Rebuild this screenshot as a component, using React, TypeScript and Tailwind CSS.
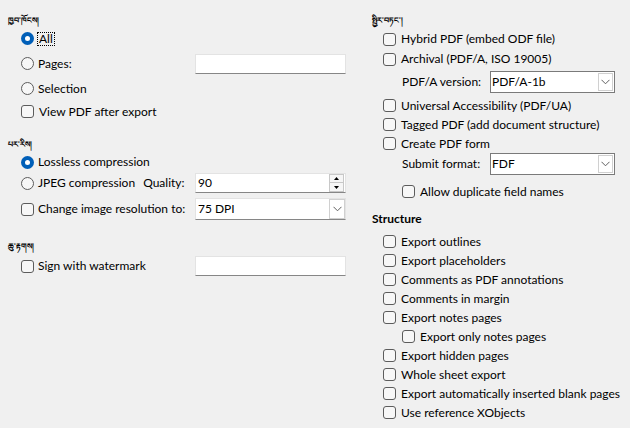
import React from "react"

const font = "font-['Lato','Noto_Sans',sans-serif]"

function Radio({ checked }: { checked?: boolean }) {
  if (checked)
    return (
      <span className="w-[13px] h-[13px] rounded-full bg-[#005fb8] flex items-center justify-center shrink-0">
        <span className="w-[5px] h-[5px] rounded-full bg-white" />
      </span>
    )
  return <span className="w-[13px] h-[13px] rounded-full border border-[#5c5c5c] bg-[#f7f7f7] shrink-0" />
}

function Box() {
  return <span className="w-[13px] h-[13px] rounded-[3px] border border-[#5c5c5c] bg-[#f7f7f7] shrink-0" />
}

function Heading({ children, className = "" }: { children: React.ReactNode; className?: string }) {
  return (
    <div className={`h-[12px] flex items-center text-[8px] font-bold leading-none text-black font-['Noto_Sans',sans-serif] ${className}`}>
      {children}
    </div>
  )
}

function Chevron() {
  return (
    <svg width="9" height="6" viewBox="0 0 9 6" className="text-[#606060]">
      <polyline points="0.5,0.8 4.5,4.8 8.5,0.8" fill="none" stroke="currentColor" strokeWidth="1" />
    </svg>
  )
}

function TextBox({ value = "" }: { value?: string }) {
  return (
    <div className="w-[151px] h-[20px] bg-white border border-[#e3e3e3] border-b-[#868686] flex items-center px-[2px] text-[12px]">
      {value}
    </div>
  )
}

function FlatCombo({ value }: { value: string }) {
  return (
    <div className="w-[151px] h-[22px] bg-white border border-[#e3e3e3] border-b-[#868686] flex items-center text-[12px]">
      <span className="flex-1 px-[2px]">{value}</span>
      <span className="w-[16px] h-[20px] border border-[#d0d0d0] flex items-center justify-center">
        <Chevron />
      </span>
    </div>
  )
}

function FramedCombo({ value }: { value: string }) {
  return (
    <div className="w-[125px] h-[22px] bg-white border border-[#7a7a7a] flex items-center text-[12px] pl-[1px] pr-[1px]">
      <span className="flex-1">{value}</span>
      <span className="w-[15px] h-[18px] border border-[#d0d0d0] flex items-center justify-center">
        <Chevron />
      </span>
    </div>
  )
}

function SpinBox({ value }: { value: string }) {
  return (
    <div className="w-[151px] h-[20px] bg-white border border-[#e3e3e3] border-b-[#868686] flex items-center text-[12px]">
      <span className="flex-1 px-[2px]">{value}</span>
      <span className="w-[15px] h-[18px] flex flex-col mr-[1px]">
        <span className="h-[9px] border border-[#c8c8c8] bg-[#f6f6f6] flex items-center justify-center">
          <svg width="5" height="3" viewBox="0 0 5 3"><polygon points="2.5,0 5,3 0,3" fill="#000" /></svg>
        </span>
        <span className="h-[9px] border border-t-0 border-[#c8c8c8] bg-[#f6f6f6] flex items-center justify-center">
          <svg width="5" height="3" viewBox="0 0 5 3"><polygon points="0,0 5,0 2.5,3" fill="#000" /></svg>
        </span>
      </span>
    </div>
  )
}

function Check({ label, h = "h-[19px]", className = "" }: { label: string; h?: string; className?: string }) {
  return (
    <div className={`${h} flex items-center gap-[5px] whitespace-nowrap ${className}`}>
      <Box />
      <span>{label}</span>
    </div>
  )
}

export default function App() {
  const structure = [
    "Export outlines",
    "Export placeholders",
    "Comments as PDF annotations",
    "Comments in margin",
    "Export notes pages",
    "Export only notes pages",
    "Export hidden pages",
    "Whole sheet export",
    "Export automatically inserted blank pages",
    "Use reference XObjects",
  ]

  return (
    <div className={`w-[630px] h-[428px] bg-[#f0f0f0] text-black text-[12px] leading-none flex overflow-hidden whitespace-nowrap ${font}`}>
      {/* left column */}
      <div className="w-[364px] pl-[8px] pt-[14px] flex flex-col">
        <Heading>ཁྱབ་ཁོངས།</Heading>
        <div className="pl-[13px] flex flex-col">
          <div className="h-[25px] flex items-center gap-[4px]">
            <Radio checked />
            <span className="outline outline-1 outline-dotted outline-black px-[1px]">All</span>
          </div>
          <div className="h-[25px] flex items-center">
            <div className="w-[174px] flex items-center gap-[4px]">
              <Radio />
              <span>Pages:</span>
            </div>
            <TextBox />
          </div>
          <div className="h-[25px] flex items-center gap-[4px]">
            <Radio />
            <span>Selection</span>
          </div>
          <Check label="View PDF after export" h="h-[21px]" className="gap-[4px]" />
        </div>

        <Heading className="mt-[16px]">པར་རིས།</Heading>
        <div className="pl-[13px] flex flex-col">
          <div className="h-[20px] mt-[2px] flex items-center gap-[4px]">
            <Radio checked />
            <span>Lossless compression</span>
          </div>
          <div className="h-[20px] mt-[1px] flex items-center">
            <div className="w-[174px] flex items-center gap-[4px]">
              <Radio />
              <span>JPEG compression</span>
              <span className="ml-[4px]">Quality:</span>
            </div>
            <SpinBox value="90" />
          </div>
          <div className="h-[22px] mt-[5px] flex items-center">
            <div className="w-[174px] flex items-center gap-[4px]">
              <Box />
              <span>Change image resolution to:</span>
            </div>
            <FlatCombo value="75 DPI" />
          </div>
        </div>

        <Heading className="mt-[20px]">ཆུ་རྟགས།</Heading>
        <div className="pl-[13px] flex flex-col">
          <div className="h-[20px] mt-[4px] flex items-center">
            <div className="w-[174px] flex items-center gap-[4px]">
              <Box />
              <span>Sign with watermark</span>
            </div>
            <TextBox />
          </div>
        </div>
      </div>

      {/* right column */}
      <div className="flex-1 pl-[8px] pt-[14px] flex flex-col">
        <Heading>སྤྱིར་བཏང་།</Heading>
        <div className="pl-[11px] flex flex-col">
          <Check label="Hybrid PDF (embed ODF file)" h="h-[20px]" className="mt-[3px]" />
          <Check label="Archival (PDF/A, ISO 19005)" h="h-[20px]" />
          <div className="h-[22px] mt-[2px] pl-[19px] flex items-center">
            <span className="w-[88px]">PDF/A version:</span>
            <FramedCombo value="PDF/A-1b" />
          </div>
          <Check label="Universal Accessibility (PDF/UA)" className="mt-[3px]" />
          <Check label="Tagged PDF (add document structure)" />
          <Check label="Create PDF form" />
          <div className="h-[21px] pl-[19px] flex items-center">
            <span className="w-[88px]">Submit format:</span>
            <FramedCombo value="FDF" />
          </div>
          <Check label="Allow duplicate field names" className="mt-[8px] pl-[19px]" />
        </div>

        <div className="h-[14px] mt-[11px] flex items-center font-bold">Structure</div>
        <div className="pl-[11px] mt-[6px] flex flex-col">
          {structure.map((s) => (
            <Check key={s} label={s} className={s === "Export only notes pages" ? "pl-[19px]" : ""} />
          ))}
        </div>
      </div>
    </div>
  )
}
